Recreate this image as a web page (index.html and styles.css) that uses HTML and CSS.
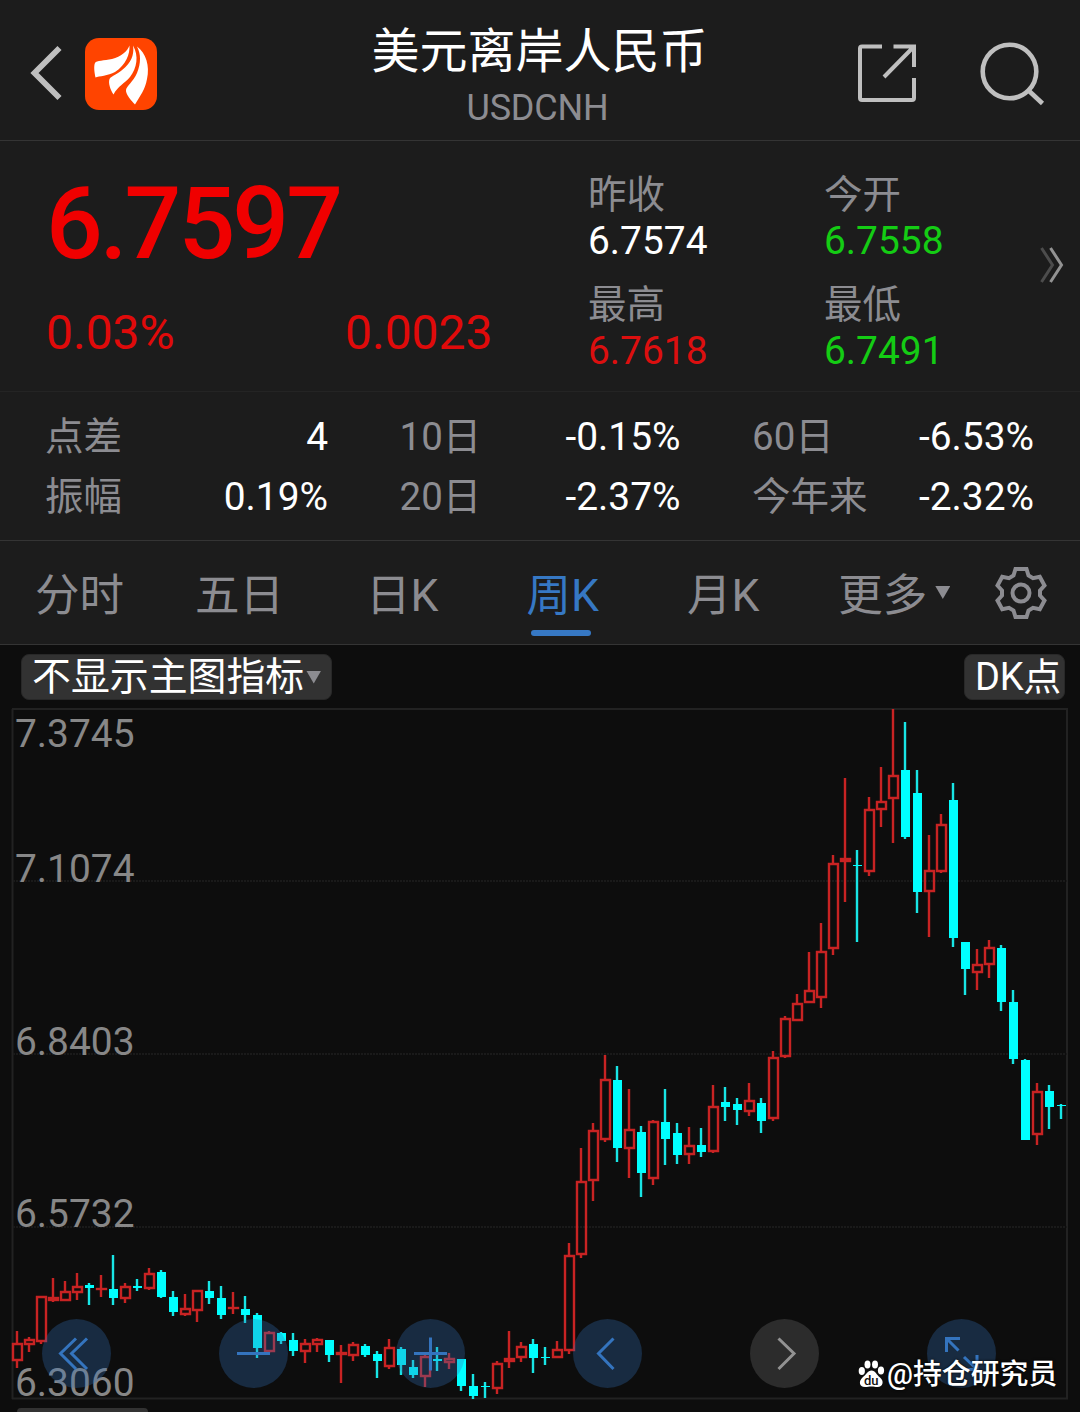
FILE: index.html
```
<!DOCTYPE html>
<html lang="zh-CN">
<head>
<meta charset="utf-8">
<title>美元离岸人民币 USDCNH</title>
<link rel="stylesheet" href="styles.css">
</head>
<body>
<header class="topbar">
  <div class="topbar-left">
    <svg class="back" width="40" height="60" viewBox="0 0 40 60"><path d="M35.500 5 10.500 30l25 25" fill="none" stroke="#bfbfbf" stroke-width="5.800"/></svg>
    <svg class="logo" width="74" height="74" viewBox="0 0 74 74">
      <rect x="1" y="1" width="72" height="72" rx="14" fill="#ff4400"/>
      <g fill="#fff">
        <path d="M45.500 8.500C46 17 42 28 31 35 24 39 15 39 11.500 40.500 10.500 36 9.500 29 11 26 12.500 23 20 24 28 22 37 20 43.500 14 45.500 8.500Z"/>
        <path d="M49 8.500C55 19 53 31 46 40 40 47 34 49 29.500 57.500 26.500 53 24 46 25.500 42 27 39 36 36 41.500 30 49 23 50 15 49 8.500Z"/>
        <path d="M53 9.500C62 16 66 29 63 42 61 53 56 59 51 67.500 47.500 64 41.500 57 42 53 42.500 49 49 45 53 36 57 26 57 17 53 9.500Z"/>
      </g>
    </svg>
  </div>
  <div class="heading">
    <h1 class="title">美元离岸人民币</h1>
    <div class="symbol">USDCNH</div>
  </div>
  <div class="topbar-right">
    <svg width="62" height="62" viewBox="0 0 62 62" fill="none" stroke="#bfbfbf" stroke-width="4"><path d="M26 4.500H6Q4 4.500 4 6.500V56Q4 58 6 58H56Q58 58 58 56V36M37.500 4.500H58V25M57 5.500 28 35"/></svg>
    <svg width="66" height="66" viewBox="0 0 66 66" fill="none" stroke="#bfbfbf" stroke-width="4.600"><circle cx="30.500" cy="29.500" r="26.800"/><path d="M49 48 63.500 61.500"/></svg>
  </div>
</header>

<section class="quote">
  <div class="price-block">
    <div class="price">6.7597</div>
    <div class="changes"><span>0.03%</span><span>0.0023</span></div>
  </div>
  <dl class="ohlc">
    <div><dt>昨收</dt><dd>6.7574</dd></div>
    <div><dt>今开</dt><dd class="down">6.7558</dd></div>
    <div><dt>最高</dt><dd class="up">6.7618</dd></div>
    <div><dt>最低</dt><dd class="down">6.7491</dd></div>
  </dl>
  <svg class="more-quote" width="26" height="38" viewBox="0 0 26 38" fill="none" stroke-width="3"><path d="M1.500 2 12.500 19 1.500 36" stroke="#4c4c4c"/><path d="M10.500 2 21.500 19 10.500 36" stroke="#929292"/></svg>
</section>

<section class="stats">
  <div class="stat"><span>点差</span><b>4</b></div>
  <div class="stat"><span>10日</span><b>-0.15%</b></div>
  <div class="stat"><span>60日</span><b>-6.53%</b></div>
  <div class="stat"><span>振幅</span><b>0.19%</b></div>
  <div class="stat"><span>20日</span><b>-2.37%</b></div>
  <div class="stat"><span>今年来</span><b>-2.32%</b></div>
</section>

<nav class="tabs">
  <a class="tab">分时</a>
  <a class="tab">五日</a>
  <a class="tab">日K</a>
  <a class="tab active">周K</a>
  <a class="tab">月K</a>
  <a class="tab">更多<i class="caret"></i></a>
  <svg class="gear" width="54" height="54" viewBox="0 0 54 54" fill="none" stroke="#8c8c91" stroke-width="4"><circle cx="27" cy="27" r="8.500"/><path d="M21.500 3H32.500L34.500 9.500L39 12.200L45.800 10.700L50.500 19.500L46 24.500V29.500L50.500 34.500L45.800 43.300L39 41.800L34.500 44.500L32.500 51H21.500L19.500 44.500L15 41.800L8.200 43.300L3.500 34.500L8 29.500V24.500L3.500 19.500L8.200 10.700L15 12.200L19.500 9.500Z"/></svg>
</nav>

<main class="chart">
  <div class="chart-bar">
    <span class="chip">不显示主图指标<i class="caret"></i></span>
    <span class="chip chip-dk">DK点</span>
  </div>
  <div class="plot">
    <svg class="candles" width="1080" height="704" viewBox="0 708 1080 704">
      <g class="frame">
        <path d="M12.500 709V1399M1067 709V1399M12 709H1068M12 1398.500H1068"/>
        <path class="grid" d="M13 881H1067M13 1054H1067M13 1227H1067"/>
      </g>
      <g id="series"></g>
      <g class="axis">
        <text x="15" y="747">7.3745</text>
        <text x="15" y="882">7.1074</text>
        <text x="15" y="1055">6.8403</text>
        <text x="15" y="1227">6.5732</text>
        <text x="15" y="1396">6.3060</text>
      </g>
    </svg>
    <div class="controls">
      <svg viewBox="0 0 69 69"><path d="M34 19.500 18.500 34.500 34 50M45 19.500 29.500 34.500 45 50"/></svg>
      <svg viewBox="0 0 69 69"><path d="M18 34.500H51"/></svg>
      <svg viewBox="0 0 69 69"><path d="M18 34.500H51M34.500 18.500V51.500"/></svg>
      <svg viewBox="0 0 69 69"><path d="M40.500 19.500 25.500 34.500 40.500 50"/></svg>
      <svg class="off" viewBox="0 0 69 69"><path d="M28.500 19.500 44 34.500 28.500 50"/></svg>
      <svg viewBox="0 0 69 69"><path d="M19.500 33V19.500H33M20 20 31.500 31.500M37 38 50 50.500M50 36V50.500H36"/></svg>
    </div>
    <div class="watermark">
      <svg width="27" height="28" viewBox="0 0 27 28"><g fill="#fff"><ellipse cx="3.800" cy="11" rx="3.100" ry="4"/><ellipse cx="9.500" cy="4.500" rx="3" ry="4.100"/><ellipse cx="17" cy="4.500" rx="3" ry="4.100"/><ellipse cx="23" cy="10.500" rx="3.100" ry="4"/><path d="M13.500 10.500C17.500 10.500 18.500 15 22 17.500 26.500 21 25 27 19.500 27 17 27 16 26.500 13.500 26.500 11 26.500 9.500 27 7 27 1 27 .5 21 4.500 17.500 8.500 14.500 9.500 10.500 13.500 10.500Z"/></g><text x="6" y="24.500">du</text></svg>
      <span>@持仓研究员</span>
    </div>
    <div class="next-chip"></div>
  </div>
</main>
<script src="script.js"></script>
</body>
</html>
```
FILE: styles.css
```
* { box-sizing: border-box; }
body {
  margin: 0;
  width: 1080px;
  height: 1412px;
  overflow: hidden;
  background: #0d0d0d;
  color: #fff;
  font-family: Roboto, "Noto Sans CJK SC", sans-serif;
}
svg { display: block; flex: none; }

.topbar {
  height: 141px;
  display: grid;
  grid-template-columns: 300px 1fr 300px;
  background: #1c1c1c;
  border-bottom: 1px solid #343434;
}
.topbar-left { display: flex; align-items: flex-start; padding-left: 24px; }
.back { margin-top: 43px; }
.logo { margin: 36.500px 0 0 19.500px; }
.heading { text-align: center; padding: 20px 1px 0 0; }
.title { margin: 0; font-size: 48px; line-height: 64px; font-weight: 400; white-space: nowrap; }
.symbol { margin-left: -4px; font-size: 36px; line-height: 48px; letter-spacing: -.2px; color: #8c8c91; }
.topbar-right { display: flex; justify-content: flex-end; gap: 61px; padding: 42px 35px 0 0; }

.quote {
  height: 251px;
  display: flex;
  background: #1c1c1c;
  border-bottom: 1px solid #242424;
}
.price-block { flex: none; width: 588px; padding: 41px 0 0 46px; color: #f00000; }
.price { font-size: 100px; line-height: 84px; font-weight: 500; letter-spacing: -3px; }
.changes { display: flex; padding-top: 42px; font-size: 48px; line-height: 50px; color: #e00a0a; }
.changes span { flex: none; width: 299px; white-space: nowrap; }
.changes span + span { width: auto; }
.ohlc {
  margin: 0;
  padding-top: 29px;
  width: 452px;
  display: grid;
  grid-template-columns: 236px 1fr;
  grid-auto-rows: 109.500px;
  align-content: start;
  font-size: 38.900px;
}
dt { line-height: 49px; font-size: 38.500px; color: #8c8c91; }
dd { margin: 0; line-height: 44px; }
.up { color: #dc0f0f; }
.down { color: #14cc14; }
.more-quote { margin-top: 105px; }

.stats {
  height: 149px;
  padding: 14px 46px 0 45px;
  display: grid;
  grid-template-columns: 283px 281px 282px;
  column-gap: 71.500px;
  grid-auto-rows: 60px;
  background: #1c1c1c;
  border-bottom: 1px solid #343434;
  font-size: 38.900px;
}
.stat { display: flex; justify-content: space-between; line-height: 62px; }
.stat span { color: #8c8c91; font-size: 38.500px; }
.stat b { font-weight: 400; }

.tabs {
  height: 104px;
  display: flex;
  align-items: flex-start;
  padding-left: 35px;
  background: #1c1c1c;
  border-bottom: 1px solid #343434;
  font-size: 44.500px;
  color: #8c8c91;
}
.tab { position: relative; height: 103px; line-height: 110px; white-space: nowrap; margin-right: 71px; }
.tab:nth-child(2) { margin-right: 82px; }
.tab:nth-child(3), .tab:nth-child(4) { margin-right: 88px; }
.tab:nth-child(5) { margin-right: 79px; }
.tab:nth-child(6) { display: flex; margin-right: 43.500px; }
.active { color: #3678c4; }
.active::after {
  content: "";
  position: absolute;
  left: 5px;
  bottom: 8px;
  width: 60px;
  height: 6px;
  border-radius: 3px;
  background: #3678c4;
}
.caret {
  display: inline-block;
  width: 15px;
  height: 13px;
  background: #8c8c91;
  clip-path: polygon(0 0, 100% 0, 50% 100%);
}
.tab .caret { margin: 45px 0 0 8px; }
.gear { margin-top: 24.500px; }

.chart-bar { display: flex; justify-content: space-between; padding: 9px 15px 0 21px; height: 63px; }
.chip {
  height: 46px;
  line-height: 50px;
  padding-left: 10px;
  width: 311px;
  display: flex;
  align-items: center;
  border-radius: 8px;
  background: #323232;
  border: 1px solid #282828;
  font-size: 38.900px;
  white-space: nowrap;
}
.chip .caret { margin-left: 2px; }
.chip-dk { width: 101px; padding-left: 10px; font-size: 38px; letter-spacing: -.3px; }
.plot { position: relative; height: 704px; }
.frame { fill: none; stroke: #222; stroke-width: 2; }
.grid { stroke: #1a1a1a; stroke-dasharray: 2 1; }
.axis { font-size: 38.900px; fill: #878787; }
.rise { fill: none; stroke: #c82323; stroke-width: 2.400; }
.fall { fill: #00ffff; }
.fall-wick { stroke: #18e5e5; stroke-width: 2.400; }
.controls {
  position: absolute;
  left: 42px;
  top: 611px;
  display: flex;
  gap: 108px;
}
.controls svg {
  width: 69px;
  height: 69px;
  border-radius: 50%;
  background: rgba(50, 113, 186, .3);
  fill: none;
  stroke: #3474be;
  stroke-width: 3;
}
.controls .off { background: rgba(117, 117, 117, .3); stroke: #929292; }
.watermark {
  position: absolute;
  left: 858px;
  top: 643px;
  display: flex;
  align-items: center;
  gap: 2px;
  line-height: 44px;
  white-space: nowrap;
  text-shadow: 0 0 3px #000;
}
.watermark span { font-size: 28.900px; font-weight: 500; padding-top: 1px; }
.watermark text { font-size: 13px; font-weight: 500; fill: #111; text-shadow: none; }
.next-chip {
  position: absolute;
  left: 17px;
  top: 700px;
  width: 131px;
  height: 4px;
  border-radius: 8px 8px 0 0;
  background: #323232;
}
```
FILE: script.js
```
// Weekly candles: direction (r = rise, f = fall), high, body top, body bottom, low
const candles = `r 1331 1343 1361 1368|r 1337 1339 1345 1352|r 1296 1296 1342 1344|r 1278 1297 1301 1302|r 1281 1291 1301 1301|r 1273 1286 1293 1300|f 1283 1285 1288 1305|r 1275 1288 1290 1297|f 1255 1289 1298 1305|r 1283 1286 1299 1303|f 1279 1286 1288 1291|r 1268 1273 1289 1290
f 1270 1272 1297 1298|f 1291 1297 1312 1316|r 1294 1308 1315 1316|r 1290 1290 1311 1322|f 1281 1291 1298 1304|f 1286 1298 1315 1319|r 1292 1307 1309 1314|f 1296 1309 1315 1323|f 1313 1315 1348 1358|r 1331 1332 1352 1353|f 1332 1333 1341 1344|f 1333 1340 1351 1356
r 1339 1343 1352 1363|r 1338 1339 1345 1352|f 1340 1340 1355 1362|r 1345 1352 1355 1383|r 1342 1344 1356 1361|f 1344 1346 1355 1357|f 1351 1354 1361 1378|r 1339 1347 1367 1369|f 1347 1349 1365 1375|f 1360 1367 1375 1378|r 1355 1356 1377 1387|f 1347 1359 1361 1371
r 1353 1358 1363 1369|f 1359 1359 1386 1391|f 1374 1386 1396 1399|f 1382 1386 1387 1398|r 1361 1363 1389 1394|r 1331 1358 1362 1368|r 1342 1346 1358 1362|f 1339 1344 1358 1373|f 1347 1357 1358 1365|r 1341 1349 1358 1358|r 1243 1255 1351 1354|r 1148 1181 1255 1258
r 1123 1130 1181 1201|r 1055 1079 1140 1142|f 1066 1080 1148 1162|r 1089 1129 1149 1178|f 1126 1132 1173 1197|r 1120 1121 1179 1185|f 1089 1122 1139 1165|f 1123 1133 1155 1164|r 1127 1145 1155 1164|f 1128 1145 1152 1157|r 1085 1106 1152 1153|f 1087 1102 1107 1121
f 1098 1104 1110 1125|r 1083 1100 1112 1116|f 1098 1103 1121 1133|r 1051 1057 1119 1121|r 1016 1018 1057 1058|r 994 1003 1021 1021|r 952 990 1003 1003|r 923 951 998 1008|r 855 863 949 955|r 778 858 862 902|f 850 865 866 942|r 797 809 872 876
r 767 801 810 827|r 709 775 799 843|f 722 770 837 839|f 770 793 892 913|r 835 870 892 937|r 814 824 872 873|f 783 800 938 947|f 942 942 969 995|r 949 964 973 990|r 940 947 965 978|f 945 948 1002 1011|f 990 1002 1059 1064
f 1059 1060 1140 1140|r 1083 1091 1135 1145|f 1085 1091 1107 1129|f 1104 1105 1106 1119`.split(/[|\n]/);

let marks = "";
candles.forEach((row, i) => {
  const [kind, ...values] = row.trim().split(" ");
  const [high, top, bottom, low] = values.map(Number);
  const x = 17 + i * 12;
  if (kind === "r") {
    const body = bottom - top <= 2
      ? `M${x - 4} ${top + 1}h9`
      : `M${x - 4} ${top + 1}h9v${bottom - top - 2}h-9z`;
    marks += `<path class="rise" stroke-linecap="square" d="${body}"/>`;
    marks += `<path class="rise" d="M${x} ${high}V${top + 1}M${x} ${bottom - 1}V${low}"/>`;
  } else {
    marks += `<path class="fall-wick" d="M${x} ${high}V${low}"/>`;
    marks += `<rect class="fall" x="${x - 4}" y="${top}" width="9" height="${bottom - top}"/>`;
  }
});
document.getElementById("series").innerHTML = marks;
```
